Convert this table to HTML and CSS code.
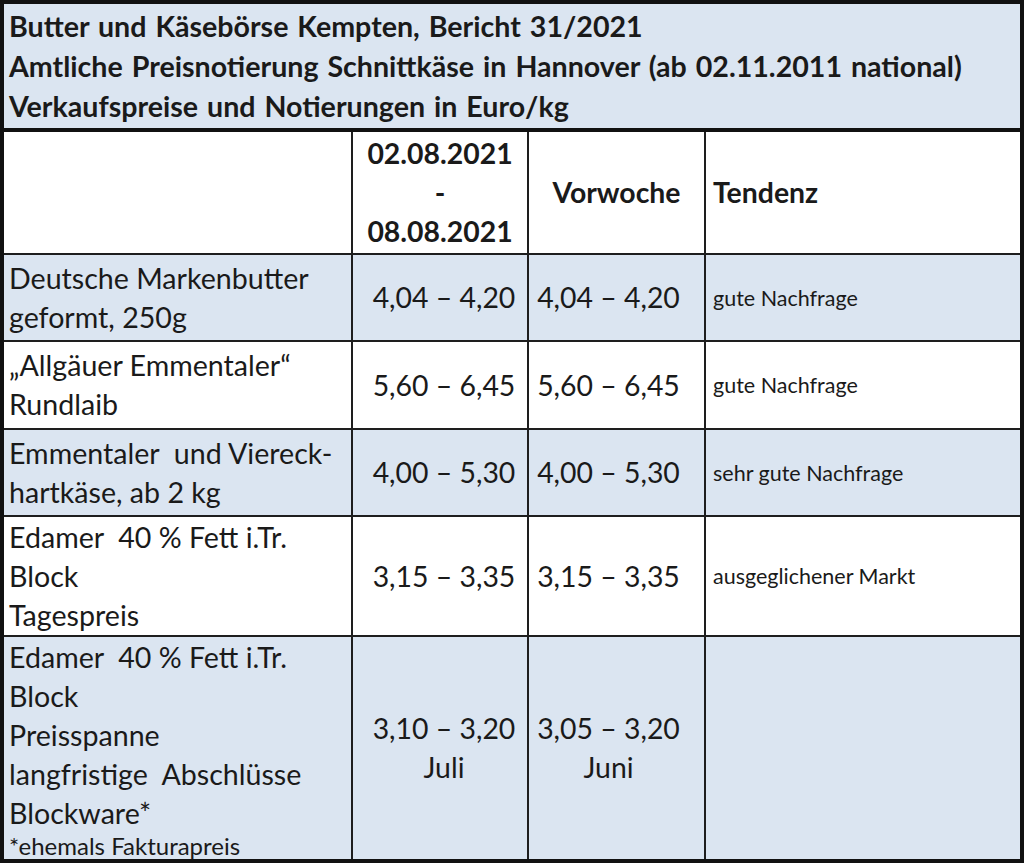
FILE: index.html
```html
<!DOCTYPE html>
<html lang="de">
<head>
<meta charset="utf-8">
<title>Butter und Käsebörse Kempten</title>
<link rel="stylesheet" href="styles.css">
</head>
<body>
<table class="report">
  <colgroup>
    <col class="c-name">
    <col class="c-price">
    <col class="c-prev">
    <col class="c-trend">
  </colgroup>
  <thead>
    <tr class="r-title">
      <th colspan="4" class="title">
        <div>Butter und Käsebörse Kempten, Bericht 31/2021</div>
        <div>Amtliche Preisnotierung Schnittkäse in Hannover (ab 02.11.2011 national)</div>
        <div>Verkaufspreise und Notierungen in Euro/kg</div>
      </th>
    </tr>
    <tr class="r-head">
      <th></th>
      <th class="center">02.08.2021<br>-<br>08.08.2021</th>
      <th class="center">Vorwoche</th>
      <th class="left">Tendenz</th>
    </tr>
  </thead>
  <tbody>
    <tr class="r-2a blue">
      <td class="name">Deutsche Markenbutter<br>geformt, 250g</td>
      <td class="price cur">4,04 – 4,20</td>
      <td class="price prev">4,04 – 4,20</td>
      <td class="trend">gute Nachfrage</td>
    </tr>
    <tr class="r-2">
      <td class="name">„Allgäuer Emmentaler“<br>Rundlaib</td>
      <td class="price cur">5,60 – 6,45</td>
      <td class="price prev">5,60 – 6,45</td>
      <td class="trend">gute Nachfrage</td>
    </tr>
    <tr class="r-2b blue">
      <td class="name">Emmentaler &nbsp;und Viereck-<br>hartkäse, ab 2 kg</td>
      <td class="price cur">4,00 – 5,30</td>
      <td class="price prev">4,00 – 5,30</td>
      <td class="trend">sehr gute Nachfrage</td>
    </tr>
    <tr class="r-3">
      <td class="name">Edamer &nbsp;40 % Fett i.Tr.<br>Block<br>Tagespreis</td>
      <td class="price cur">3,15 – 3,35</td>
      <td class="price prev">3,15 – 3,35</td>
      <td class="trend">ausgeglichener Markt</td>
    </tr>
    <tr class="r-5 blue">
      <td class="name">Edamer &nbsp;40 % Fett i.Tr.<br>Block<br>Preisspanne<br>langfristige &nbsp;Abschlüsse<br>Blockware*<span class="note">*ehemals Fakturapreis</span></td>
      <td class="price cur">3,10 – 3,20<br>Juli</td>
      <td class="price prev">3,05 – 3,20<br>Juni</td>
      <td class="trend"></td>
    </tr>
  </tbody>
</table>
</body>
</html>
```

FILE: styles.css
```css
html, body {
  margin: 0;
  padding: 0;
  background: #ffffff;
}

.report {
  width: 1024px;
  border-collapse: collapse;
  table-layout: fixed;
  border: 4px solid #111111;
  font-family: "Lato", "Open Sans", sans-serif;
  color: #1a1a1a;
}

.c-name { width: 350px; }
.c-price { width: 176px; }
.c-prev { width: 177px; }
.c-trend { width: auto; }

.report th,
.report td {
  border: 2px solid #1e1e1e;
  padding: 0;
  vertical-align: middle;
}

.r-title th {
  background: #dbe5f1;
  text-align: left;
  font-weight: 700;
  font-size: 28.6px;
  line-height: 40px;
  padding: 2px 0 2px 5px;
  border-bottom: 4px solid #111111;
  word-spacing: 2px;
}

.r-title { height: 128px; }

.r-head { height: 124px; }

.r-head th {
  background: #ffffff;
  font-weight: 700;
  font-size: 28.4px;
  line-height: 39px;
}

.r-head th.center { text-align: center; }
.r-head th.left { text-align: left; padding-left: 7px; }

.r-2a { height: 87px; }
.r-2 { height: 88px; }
.r-2b { height: 87px; }
.r-3 { height: 120px; }
.r-5 { height: 225px; }

.report tbody tr { background: #ffffff; }
.report tbody tr.blue { background: #dbe5f1; }

.name {
  font-size: 28.6px;
  line-height: 39px;
  padding-left: 5px !important;
  text-align: left;
}

.price {
  font-size: 28.4px;
  line-height: 39px;
  text-align: center;
  white-space: nowrap;
}

.price.cur { padding-left: 8px !important; }
.price.prev { padding-right: 16px !important; }

.trend {
  font-size: 21.5px;
  line-height: 26px;
  text-align: left;
  padding-left: 7px !important;
}

.note {
  display: block;
  font-size: 24px;
  line-height: 26px;
}
```
